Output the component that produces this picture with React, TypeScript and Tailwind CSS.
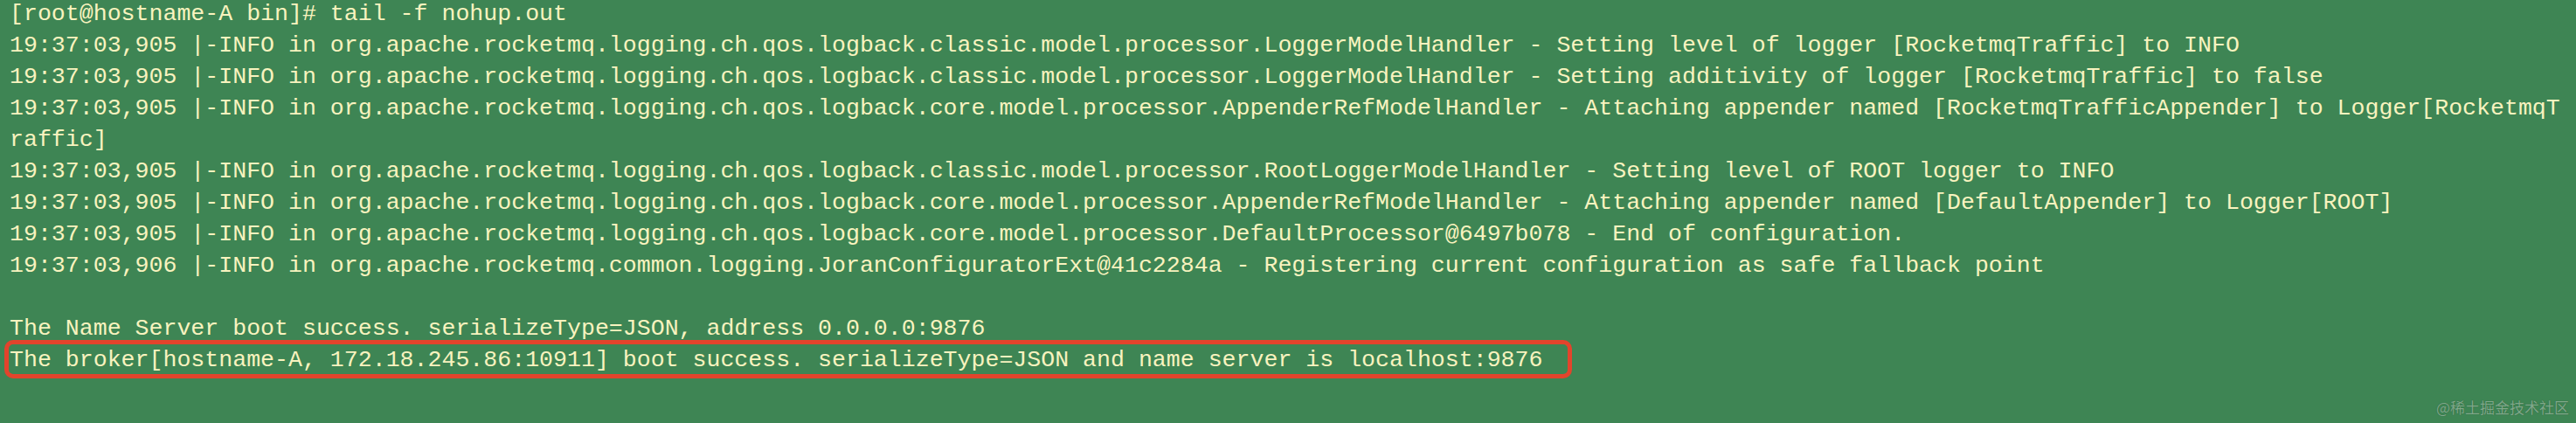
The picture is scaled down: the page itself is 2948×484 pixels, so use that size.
const lines: string[] = [
  "[root@hostname-A bin]# tail -f nohup.out",
  "19:37:03,905 |-INFO in org.apache.rocketmq.logging.ch.qos.logback.classic.model.processor.LoggerModelHandler - Setting level of logger [RocketmqTraffic] to INFO",
  "19:37:03,905 |-INFO in org.apache.rocketmq.logging.ch.qos.logback.classic.model.processor.LoggerModelHandler - Setting additivity of logger [RocketmqTraffic] to false",
  "19:37:03,905 |-INFO in org.apache.rocketmq.logging.ch.qos.logback.core.model.processor.AppenderRefModelHandler - Attaching appender named [RocketmqTrafficAppender] to Logger[RocketmqT",
  "raffic]",
  "19:37:03,905 |-INFO in org.apache.rocketmq.logging.ch.qos.logback.classic.model.processor.RootLoggerModelHandler - Setting level of ROOT logger to INFO",
  "19:37:03,905 |-INFO in org.apache.rocketmq.logging.ch.qos.logback.core.model.processor.AppenderRefModelHandler - Attaching appender named [DefaultAppender] to Logger[ROOT]",
  "19:37:03,905 |-INFO in org.apache.rocketmq.logging.ch.qos.logback.core.model.processor.DefaultProcessor@6497b078 - End of configuration.",
  "19:37:03,906 |-INFO in org.apache.rocketmq.common.logging.JoranConfiguratorExt@41c2284a - Registering current configuration as safe fallback point",
  "",
  "The Name Server boot success. serializeType=JSON, address 0.0.0.0:9876",
  "The broker[hostname-A, 172.18.245.86:10911] boot success. serializeType=JSON and name server is localhost:9876",
];

export default function App() {
  return (
    <div className="relative w-[2948px] h-[484px] overflow-hidden bg-[#3e8554]">
      {/* terminal output */}
      <pre className="-mt-[2px] pl-[11px] font-['Liberation_Mono',monospace] text-[26.58px] leading-[36px] text-[#f8f3bf] whitespace-pre">
        {lines.map((l, i) => (
          <div key={i} className="h-[36px]">
            {l}
          </div>
        ))}
      </pre>

      {/* highlight box around the broker line */}
      <div className="absolute left-[5px] top-[389px] w-[1794px] h-[44px] rounded-[10px] border-[5px] border-[#e2442c]" />

      {/* watermark */}
      <div className="absolute right-[8px] bottom-[8px] font-['Noto_Sans_CJK_SC',sans-serif] text-[17px] leading-[20px] text-[#7fa88a] [text-shadow:0_0_1px_#2a5a38]">
        @稀土掘金技术社区
      </div>
    </div>
  );
}
